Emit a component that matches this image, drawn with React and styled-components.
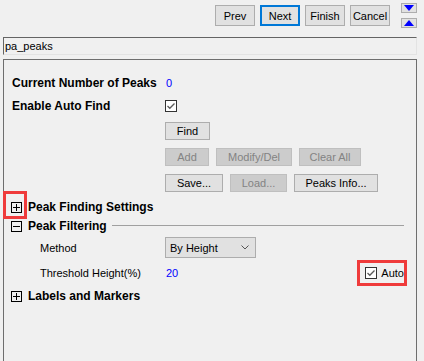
import React from "react";
import styled, { createGlobalStyle } from "styled-components";

const GlobalStyle = createGlobalStyle`
  html, body {
    margin: 0;
    padding: 0;
    background: #f0f0f0;
    font-family: "Liberation Sans", Arial, sans-serif;
    font-size: 11px;
    color: #000;
  }
`;

const Page = styled.div`
  width: 424px;
  height: 361px;
  overflow: hidden;
  background: #f0f0f0;
`;

const Toolbar = styled.div`
  height: 37px;
  box-sizing: border-box;
  display: flex;
  justify-content: flex-end;
  align-items: flex-start;
  padding: 3px 7px 0 0;
`;

const NavButtons = styled.div`
  display: flex;
  gap: 5px;
  margin-top: 2px;
  margin-right: 11px;
`;

const Button = styled.button`
  box-sizing: border-box;
  width: ${(p) => p.$w || 40}px;
  height: ${(p) => p.$h || 21}px;
  padding: 0;
  font-family: inherit;
  font-size: 11px;
  background: ${(p) => (p.disabled ? "#cccccc" : "#e1e1e1")};
  border: ${(p) => (p.$focus ? "2px solid #0078d7" : "1px solid")};
  border-color: ${(p) =>
    p.$focus ? "#0078d7" : p.disabled ? "#bfbfbf" : "#adadad"};
  color: ${(p) => (p.disabled ? "#838383" : "#000")};
  display: flex;
  align-items: center;
  justify-content: center;
`;

const ArrowColumn = styled.div`
  display: flex;
  flex-direction: column;
  gap: 5px;
`;

const ArrowButton = styled.div`
  box-sizing: border-box;
  width: 16px;
  height: 10px;
  background: #e1e1e1;
  border: 1px solid #adadad;
  display: flex;
  align-items: center;
  justify-content: center;
`;

const NameField = styled.div`
  box-sizing: border-box;
  margin-left: 3px;
  width: 414px;
  height: 18px;
  border-top: 1px solid #646464;
  border-left: 1px solid #646464;
  border-right: 1px solid #e3e3e3;
  border-bottom: 1px solid #e3e3e3;
  padding: 1px 0 0 1px;
  line-height: 14px;
`;

const Panel = styled.div`
  box-sizing: border-box;
  margin: 4px 0 0 3px;
  width: 414px;
  height: 303px;
  border: 1px solid #6e6e6e;
  border-bottom: none;
  padding: 15px 0 0 8px;
  position: relative;
`;

const Row = styled.div`
  display: flex;
  align-items: center;
  height: ${(p) => p.$h || 16}px;
  margin-top: ${(p) => p.$top || 0}px;
  padding-left: ${(p) => p.$indent || 0}px;
`;

const Label = styled.div`
  width: ${(p) => p.$w || 153}px;
  flex: none;
  font-weight: ${(p) => (p.$bold ? 700 : 400)};
  font-size: ${(p) => (p.$bold ? "12px" : "11px")};
  white-space: nowrap;
`;

const Value = styled.span`
  color: #0000ff;
  padding-left: 1px;
`;

const ButtonGroup = styled.div`
  display: flex;
  gap: 7px;
`;

const CheckBoxBox = styled.span`
  box-sizing: border-box;
  width: 12px;
  height: 12px;
  border: 1px solid #333;
  background: #fff;
  display: inline-flex;
  align-items: center;
  justify-content: center;
  flex: none;
`;

const SectionHeader = styled.div`
  display: flex;
  align-items: center;
  height: 16px;
  margin-top: ${(p) => p.$top || 0}px;
  margin-left: -1px;
  font-weight: 700;
  font-size: 12px;
  white-space: nowrap;
`;

const ToggleBox = styled.span`
  box-sizing: border-box;
  width: 11px;
  height: 11px;
  border: 1px solid #000;
  position: relative;
  flex: none;
  &::before {
    content: "";
    position: absolute;
    left: 1px;
    right: 1px;
    top: 4px;
    height: 1px;
    background: #000;
  }
  &::after {
    content: "";
    display: ${(p) => (p.$open ? "none" : "block")};
    position: absolute;
    top: 1px;
    bottom: 1px;
    left: 4px;
    width: 1px;
    background: #000;
  }
`;

/* red annotation frame laid over a control */
const Highlight = styled.span`
  position: absolute;
  top: ${(p) => p.$t}px;
  right: ${(p) => p.$r}px;
  bottom: ${(p) => p.$b}px;
  left: ${(p) => p.$l}px;
  border: 3px solid #ef3b3b;
  pointer-events: none;
`;

const ToggleWrap = styled.span`
  position: relative;
  display: inline-flex;
  margin-right: 6px;
`;

const Rule = styled.div`
  flex: 1;
  height: 1px;
  background: #a0a0a0;
  margin: 0 12px 0 5px;
  position: relative;
  top: -1px;
`;

const Combo = styled.div`
  box-sizing: border-box;
  width: 91px;
  height: 21px;
  background: #e1e1e1;
  border: 1px solid #adadad;
  display: flex;
  align-items: center;
  justify-content: space-between;
  padding: 0 6px 0 4px;
`;

const AutoCheck = styled.label`
  position: relative;
  margin-left: auto;
  margin-right: 12px;
  display: flex;
  align-items: center;
  gap: 4px;
  height: 13px;
`;

const Check = () => (
  <CheckBoxBox>
    <svg width="10" height="10" viewBox="0 0 10 10">
      <polyline
        points="1.5,5 3.8,7.3 8.5,2.5"
        fill="none"
        stroke="#5a5a5a"
        strokeWidth="1.3"
      />
    </svg>
  </CheckBoxBox>
);

const Toggle = ({ open, marked }) => (
  <ToggleWrap>
    <ToggleBox $open={open} />
    {marked && <Highlight $t={-11} $l={-8} $r={-5} $b={-6} />}
  </ToggleWrap>
);

export default function App() {
  return (
    <Page>
      <GlobalStyle />
      <Toolbar>
        <NavButtons>
          <Button>Prev</Button>
          <Button $focus>Next</Button>
          <Button>Finish</Button>
          <Button>Cancel</Button>
        </NavButtons>
        <ArrowColumn>
          <ArrowButton>
            <svg width="10" height="6" viewBox="0 0 10 6">
              <polygon points="0,0 10,0 5,6" fill="#0000ff" />
            </svg>
          </ArrowButton>
          <ArrowButton>
            <svg width="10" height="6" viewBox="0 0 10 6">
              <polygon points="0,6 10,6 5,0" fill="#0000ff" />
            </svg>
          </ArrowButton>
        </ArrowColumn>
      </Toolbar>

      <NameField>pa_peaks</NameField>

      <Panel>
        <Row>
          <Label $bold>Current Number of Peaks</Label>
          <Value>0</Value>
        </Row>
        <Row $top={7}>
          <Label $bold>Enable Auto Find</Label>
          <Check />
        </Row>
        <Row $top={8} $h={18}>
          <Label />
          <Button $w={45} $h={18}>Find</Button>
        </Row>
        <Row $top={8} $h={18}>
          <Label />
          <ButtonGroup>
            <Button $w={44} $h={18} disabled>Add</Button>
            <Button $w={76} $h={18} disabled>Modify/Del</Button>
            <Button $w={62} $h={18} disabled>Clear All</Button>
          </ButtonGroup>
        </Row>
        <Row $top={8} $h={18}>
          <Label />
          <ButtonGroup>
            <Button $w={58} $h={18}>Save...</Button>
            <Button $w={57} $h={18} disabled>Load...</Button>
            <Button $w={84} $h={18}>Peaks Info...</Button>
          </ButtonGroup>
        </Row>

        <SectionHeader $top={7}>
          <Toggle marked />
          Peak Finding Settings
        </SectionHeader>
        <SectionHeader $top={3}>
          <Toggle open />
          Peak Filtering
          <Rule />
        </SectionHeader>

        <Row $top={3} $h={21} $indent={28}>
          <Label $w={125}>Method</Label>
          <Combo>
            <span>By Height</span>
            <svg width="8" height="5" viewBox="0 0 8 5">
              <polyline points="0.5,0.5 4,4 7.5,0.5" fill="none" stroke="#555" />
            </svg>
          </Combo>
        </Row>
        <Row $top={4} $h={21} $indent={28}>
          <Label $w={125}>Threshold Height(%)</Label>
          <Value>20</Value>
          <AutoCheck>
            <Check />
            Auto
            <Highlight $t={-6} $l={-8} $r={-3} $b={-7} />
          </AutoCheck>
        </Row>

        <SectionHeader $top={5}>
          <Toggle />
          Labels and Markers
        </SectionHeader>
      </Panel>
    </Page>
  );
}
